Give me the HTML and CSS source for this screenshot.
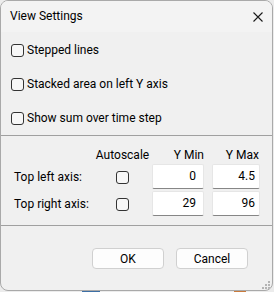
FILE: index.html
```html
<!DOCTYPE html>
<html lang="en">
<head>
  <meta charset="UTF-8" />
  <meta name="viewport" content="width=device-width, initial-scale=1.0"/>
  <title>View Settings</title>
  <link rel="stylesheet" href="styles.css">
</head>
<body>
  <div class="backdrop">
    <span class="chip chip-blue"></span>
    <span class="chip chip-orange"></span>
  </div>

  <div class="window">
    <div class="titlebar">
      <span class="title">View Settings</span>
      <svg class="close" width="10" height="10" viewBox="0 0 10 10">
        <path d="M0.5 0.5 L9.5 9.5 M9.5 0.5 L0.5 9.5" stroke="#1a1a1a" stroke-width="1.1" fill="none"/>
      </svg>
    </div>

    <div class="options">
      <label class="option"><span class="box"></span>Stepped lines</label>
      <label class="option"><span class="box"></span>Stacked area on left Y axis</label>
      <label class="option"><span class="box"></span>Show sum over time step</label>
    </div>

    <div class="rule"></div>

    <div class="axes">
      <span></span>
      <span class="head center">Autoscale</span>
      <span class="head min">Y Min</span>
      <span class="head max">Y Max</span>

      <span class="axis-label">Top left axis:</span>
      <span class="center"><span class="box"></span></span>
      <span class="field wide">0</span>
      <span class="field narrow">4.5</span>

      <span class="axis-label">Top right axis:</span>
      <span class="center"><span class="box"></span></span>
      <span class="field wide">29</span>
      <span class="field narrow">96</span>
    </div>

    <div class="rule"></div>

    <div class="buttons">
      <button class="btn">OK</button>
      <button class="btn">Cancel</button>
    </div>

    <svg class="grip" width="9" height="9" viewBox="0 0 9 9">
      <rect x="7" y="1" width="2" height="2" fill="#b4b4b4"/>
      <rect x="4" y="4" width="2" height="2" fill="#b4b4b4"/>
      <rect x="7" y="4" width="2" height="2" fill="#b4b4b4"/>
      <rect x="1" y="7" width="2" height="2" fill="#b4b4b4"/>
      <rect x="4" y="7" width="2" height="2" fill="#b4b4b4"/>
      <rect x="7" y="7" width="2" height="2" fill="#b4b4b4"/>
    </svg>
  </div>
</body>
</html>
```

FILE: styles.css
```css
body {
  margin: 0;
  background: #ececec;
  font-family: "Segoe UI", Roboto, sans-serif;
  font-size: 12px;
  color: #000;
  width: 274px;
  height: 292px;
  overflow: hidden;
  position: relative;
}
.backdrop {
  position: absolute;
  left: 0;
  right: 0;
  bottom: 0;
  height: 6px;
}
.chip {
  position: absolute;
  bottom: 0;
  height: 6px;
}
.chip-blue {
  left: 82px;
  width: 18px;
  background: #3d6fa5;
}
.chip-orange {
  left: 234px;
  width: 12px;
  background: #c97a3c;
}
.window {
  position: relative;
  box-sizing: border-box;
  width: 273px;
  height: 291px;
  border: 1px solid #a9a9a9;
  border-radius: 8px;
  background: #f0f0f0;
  overflow: hidden;
}
.titlebar {
  height: 31px;
  background: #f3f3f3;
  display: flex;
  align-items: center;
  justify-content: space-between;
  padding: 0 9px 0 9px;
}
.title {
  padding-bottom: 2px;
}
.close {
  display: block;
}
.options {
  padding: 1px 0 0 10px;
}
.option {
  height: 34px;
  display: flex;
  align-items: center;
  gap: 3px;
}
.box {
  display: inline-block;
  box-sizing: border-box;
  width: 13px;
  height: 13px;
  border: 1px solid #333;
  border-radius: 3px;
  background: #f7f7f7;
}
.rule {
  height: 1px;
  background: #a0a0a0;
}
.axes {
  display: grid;
  grid-template-columns: 82px 53px 59px 52px;
  grid-template-rows: 14px 25px 25px;
  row-gap: 2px;
  padding: 12px 0 9px 13px;
  align-items: center;
}
.center {
  display: flex;
  justify-content: center;
}
.head {
  line-height: 14px;
}
.min {
  text-align: right;
  padding-right: 4px;
}
.max {
  text-align: right;
  padding-right: 1px;
}
.axes .box {
  margin-top: 1px;
}
.field {
  justify-self: end;
  box-sizing: border-box;
  height: 25px;
  background: #fff;
  border: 1px solid #e6e6e6;
  border-bottom: 1px solid #868686;
  border-radius: 2px;
  text-align: right;
  line-height: 22px;
  padding-right: 7px;
}
.field.wide {
  width: 52px;
  margin-right: 4px;
}
.field.narrow {
  width: 48px;
  padding-right: 4px;
}
.axis-label {
  padding-left: 0;
}
.buttons {
  display: flex;
  gap: 12px;
  padding: 22px 0 0 91px;
}
.btn {
  width: 72px;
  height: 21px;
  padding: 0;
  background: #fdfdfd;
  border: 1px solid #d0d0d0;
  border-radius: 4px;
  font-family: inherit;
  font-size: 12px;
  color: #000;
}
.grip {
  position: absolute;
  right: 2px;
  bottom: 1px;
}
```
